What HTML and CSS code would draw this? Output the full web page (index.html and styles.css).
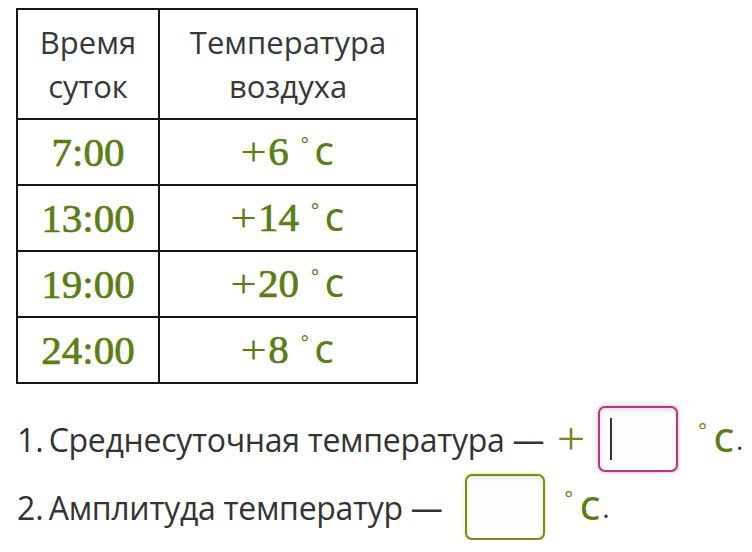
FILE: index.html
```html
<!DOCTYPE html>
<html lang="ru">
<head>
<meta charset="utf-8">
<link rel="stylesheet" href="styles.css">
</head>
<body>
<div class="page">
  <table class="temps">
    <colgroup><col class="c1"><col class="c2"></colgroup>
    <thead>
      <tr><th>Время<br>суток</th><th>Температура<br>воздуха</th></tr>
    </thead>
    <tbody>
      <tr><td><span class="num">7:00</span></td><td><span class="num"><span class="plus">+</span>6</span><span class="deg">°</span><span class="unit">C</span></td></tr>
      <tr><td><span class="num">13:00</span></td><td><span class="num"><span class="plus">+</span>14</span><span class="deg">°</span><span class="unit">C</span></td></tr>
      <tr><td><span class="num">19:00</span></td><td><span class="num"><span class="plus">+</span>20</span><span class="deg">°</span><span class="unit">C</span></td></tr>
      <tr><td><span class="num">24:00</span></td><td><span class="num"><span class="plus">+</span>8</span><span class="deg">°</span><span class="unit">C</span></td></tr>
    </tbody>
  </table>
  <div class="qline q1">
    <span class="qnum">1.</span><span class="qtext">Среднесуточная температура —</span>
    <span class="qplus">+</span>
    <span class="box box-active"><span class="caret"></span></span>
    <span class="qdeg">°</span><span class="qunit">C</span><span class="qdot">.</span>
  </div>
  <div class="qline q2">
    <span class="qnum">2.</span><span class="qtext">Амплитуда температур —</span>
    <span class="box box-idle"></span>
    <span class="qdeg">°</span><span class="qunit">C</span><span class="qdot">.</span>
  </div>
</div>
</body>
</html>
```

FILE: styles.css
```css
html, body {
  margin: 0;
  padding: 0;
  background: #ffffff;
}

.page {
  padding: 8px 0 0 16px;
  font-family: "Open Sans", "Liberation Sans", sans-serif;
  color: #333333;
}

.temps {
  border-collapse: collapse;
  table-layout: fixed;
  width: 400px;
  border: 2px solid #141414;
}

.c1 { width: 142px; }
.c2 { width: 258px; }

.temps th,
.temps td {
  border: 2px solid #141414;
  text-align: center;
  vertical-align: middle;
  padding: 0;
}

.temps th {
  height: 108px;
  font-weight: 400;
  font-size: 31px;
  line-height: 44px;
  color: #383838;
}

.temps td {
  height: 64px;
  color: #5b7e14;
  white-space: nowrap;
}

.num {
  font-family: "Liberation Serif", "Times New Roman", serif;
  font-size: 41px;
  font-weight: 400;
  line-height: 1;
  -webkit-text-stroke: 0.7px #5b7e14;
}

.plus {
  -webkit-text-stroke: 0;
  margin-right: 3px;
  display: inline-block;
  transform: scaleX(1.15);
}

.deg {
  font-family: "DejaVu Sans", sans-serif;
  font-size: 20px;
  vertical-align: 13px;
  margin-left: 11px;
  margin-right: 5px;
}

.unit {
  font-family: "Open Sans", sans-serif;
  font-size: 30px;
  font-weight: 600;
}

.qline {
  display: flex;
  align-items: center;
  height: 66px;
  font-size: 32px;
  white-space: nowrap;
  padding-left: 1px;
}

.q1 { margin-top: 22px; }
.q2 { margin-top: 2px; }

.qnum {
  color: #333333;
  margin-right: 5px;
}

.qtext {
  color: #333333;
  letter-spacing: -0.3px;
}

.qplus {
  color: #6b8c1a;
  font-family: "Liberation Serif", serif;
  font-size: 46px;
  line-height: 1;
  margin-left: 14px;
  margin-right: 14px;
  display: inline-block;
  transform: scaleX(1.1);
}

.box {
  box-sizing: border-box;
  width: 80px;
  height: 66px;
  border-radius: 7px;
  background: #fdfdfd;
  display: flex;
  align-items: center;
}

.q2 .box { margin-left: 22px; }

.box-active {
  border: 2px solid #b23b7c;
  box-shadow: 0 0 3px 1px rgba(220, 120, 180, 0.45), inset 0 2px 4px rgba(0, 0, 0, 0.12);
}

.box-idle {
  border: 2px solid #7d8b18;
  box-shadow: 0 0 3px 1px rgba(200, 215, 90, 0.45), inset 0 2px 4px rgba(0, 0, 0, 0.10);
}

.caret {
  width: 2px;
  height: 42px;
  margin-left: 10px;
  background: #333333;
}

.qdeg {
  color: #6b8c1a;
  font-family: "DejaVu Sans", sans-serif;
  font-size: 21px;
  align-self: flex-start;
  margin-top: 14px;
  margin-left: 19px;
  margin-right: 6px;
}

.qunit {
  color: #5b7e14;
  font-size: 32px;
  font-weight: 600;
}

.qdot {
  color: #333333;
  font-size: 28px;
  margin-left: 2px;
}
```
